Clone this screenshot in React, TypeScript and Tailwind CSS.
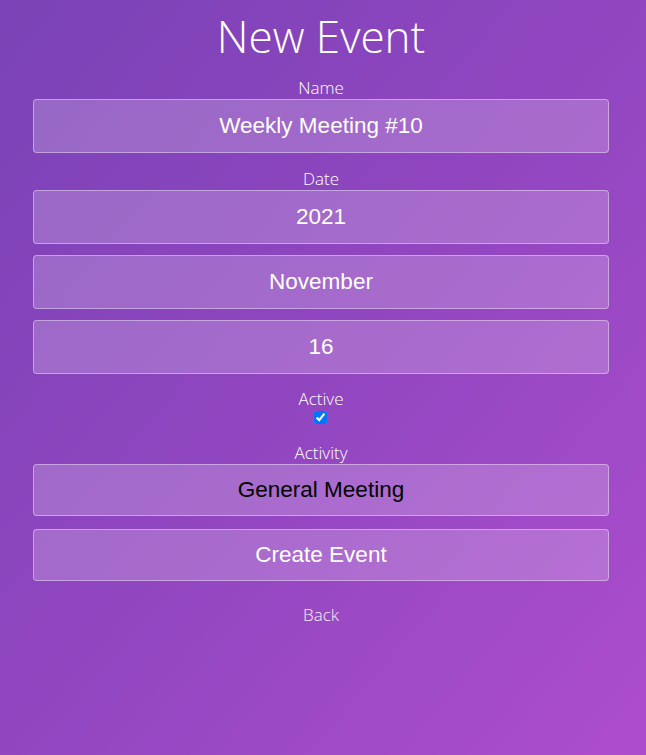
import React from "react";

const label = "block h-[23px] text-center text-[17px] leading-[23px] font-[350] text-white font-['Open_Sans',sans-serif]";
const base =
  "block w-full rounded-[4px] border border-white/40 bg-white/20 text-center text-[22.5px] font-['Liberation_Sans',Arial,sans-serif] outline-none appearance-none";
const field = base + " h-[54px] text-white";

export default function App() {
  return (
    <div className="min-h-[755px] w-full bg-linear-to-br from-[#7a42b6] via-[#9146c0] to-[#ad4dcd]">
      <div className="ml-[33px] w-[576px] flex flex-col">
        <h1 className="h-[76px] pt-[4px] text-center text-[44px] leading-[64px] font-light text-white font-['Open_Sans',sans-serif]">
          New Event
        </h1>
        <label className={label}>Name</label>
        <input className={field} defaultValue="Weekly Meeting #10" />
        <label className={label + " mt-[14px]"}>Date</label>
        <div className="flex flex-col gap-[11px]">
          <input className={field} defaultValue="2021" />
          <input className={field} defaultValue="November" />
          <input className={field} defaultValue="16" />
        </div>
        <label className={label + " mt-[13px]"}>Active</label>
        <div className="flex justify-center h-[13px] mt-[1px]">
          <input type="checkbox" defaultChecked className="m-0 ml-[-1px] h-[13px] w-[13px] accent-[#0075ff]" />
        </div>
        <label className={label + " mt-[17px]"}>Activity</label>
        <select className={base + " h-[52px] text-black"} defaultValue="General Meeting">
          <option>General Meeting</option>
        </select>
        <button className={base + " h-[52px] text-white mt-[13px]"}>Create Event</button>
        <a className="block mt-[22px] h-[23px] text-center text-[17px] leading-[23px] font-[350] text-white/90 font-['Open_Sans',sans-serif]">
          Back
        </a>
      </div>
    </div>
  );
}
